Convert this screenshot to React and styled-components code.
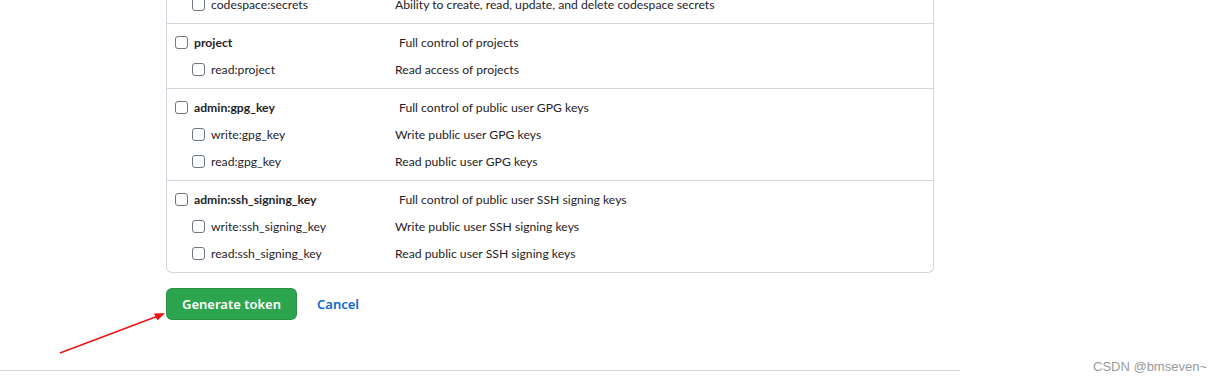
import React from 'react'
import styled, { createGlobalStyle } from 'styled-components'

const groups = [
  {
    partial: true,
    rows: [{ name: 'codespace:secrets', desc: 'Ability to create, read, update, and delete codespace secrets' }],
  },
  {
    name: 'project',
    desc: 'Full control of projects',
    rows: [{ name: 'read:project', desc: 'Read access of projects' }],
  },
  {
    name: 'admin:gpg_key',
    desc: 'Full control of public user GPG keys',
    rows: [
      { name: 'write:gpg_key', desc: 'Write public user GPG keys' },
      { name: 'read:gpg_key', desc: 'Read public user GPG keys' },
    ],
  },
  {
    name: 'admin:ssh_signing_key',
    desc: 'Full control of public user SSH signing keys',
    rows: [
      { name: 'write:ssh_signing_key', desc: 'Write public user SSH signing keys' },
      { name: 'read:ssh_signing_key', desc: 'Read public user SSH signing keys' },
    ],
  },
]

const App = () => {
  return (
    <>
      <Global />
      <Page>
        <Main>
          <Scopes>
            {groups.map((g, i) => (
              <Group key={i} $partial={g.partial}>
                {g.name && (
                  <Row>
                    <Label $w={224}>
                      <Check type="checkbox" />
                      <strong>{g.name}</strong>
                    </Label>
                    <Desc>{g.desc}</Desc>
                  </Row>
                )}
                {g.rows.map((r) => (
                  <Row key={r.name} $child>
                    <Label $w={203}>
                      <Check type="checkbox" />
                      <span>{r.name}</span>
                    </Label>
                    <Desc>{r.desc}</Desc>
                  </Row>
                ))}
              </Group>
            ))}
          </Scopes>
          <Actions>
            <Button type="button">Generate token</Button>
            <Cancel href="#">Cancel</Cancel>
          </Actions>
        </Main>
        <Footer />
        <Arrow width="120" height="50" viewBox="0 0 120 50">
          <line x1="2" y1="47" x2="100" y2="10" stroke="#f01414" strokeWidth="1.6" />
          <path d="M107 7 L96 7.5 L99.5 14.5 Z" fill="#f01414" />
        </Arrow>
        <Watermark>CSDN @bmseven~</Watermark>
      </Page>
    </>
  )
}

export default App

const Global = createGlobalStyle`
  body {
    margin: 0;
    background: #fff;
    font-family: "Noto Sans", "Open Sans", sans-serif;
    color: #1f2328;
  }
`

const Page = styled.div`
  position: relative;
  width: 1224px;
  height: 381px;
  overflow: hidden;
`

const Main = styled.div`
  width: 768px;
  margin: -9px 0 0 166px;
`

const Scopes = styled.div`
  border: 1px solid #d0d7de;
  border-top: none;
  border-radius: 0 0 6px 6px;
`

const Group = styled.div`
  padding: ${(p) => (p.$partial ? '0 0 5px' : '5px 0 5px')};
  & + & {
    border-top: 1px solid #d0d7de;
  }
`

const Row = styled.div`
  display: flex;
  align-items: center;
  height: 27px;
  padding-left: ${(p) => (p.$child ? '25px' : '8px')};
  font-family: Lato, "Noto Sans", sans-serif;
  font-size: 12.2px;
`

const Label = styled.label`
  display: flex;
  align-items: center;
  gap: 6px;
  width: ${(p) => p.$w}px;
  flex-shrink: 0;
  strong {
    font-weight: 700;
  }
`

const Check = styled.input`
  appearance: none;
  width: 13px;
  height: 13px;
  margin: 0;
  border: 1px solid #6e7781;
  border-radius: 3px;
  background: #fff;
`

const Desc = styled.span`
  color: #1f2328;
`

const Actions = styled.div`
  display: flex;
  align-items: center;
  gap: 20px;
  margin-top: 15px;
`

const Button = styled.button`
  height: 32px;
  width: 131px;
  padding: 0;
  border: 1px solid rgba(31, 35, 40, 0.15);
  border-radius: 6px;
  background: #2da44e;
  color: #fff;
  font-family: inherit;
  font-size: 13px;
  font-weight: 600;
`

const Cancel = styled.a`
  color: #0969da;
  font-size: 13px;
  font-weight: 600;
  text-decoration: none;
`

const Footer = styled.div`
  position: absolute;
  left: 0;
  top: 370px;
  width: 960px;
  border-top: 1px solid #d0d7de;
`

const Arrow = styled.svg`
  position: absolute;
  left: 58px;
  top: 306px;
`

const Watermark = styled.div`
  position: absolute;
  left: 1093px;
  top: 359px;
  font-family: "Liberation Sans", sans-serif;
  font-size: 13px;
  color: #9a9a9a;
`
